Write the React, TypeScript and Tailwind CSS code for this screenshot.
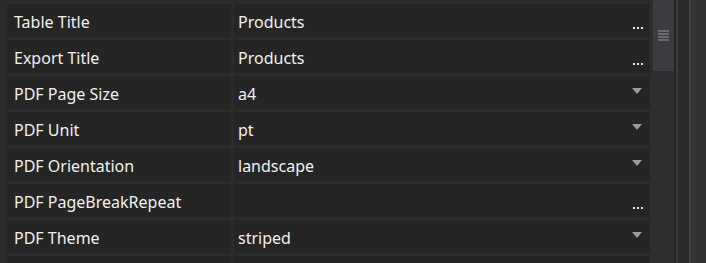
import React from "react";

type Row = { label: string; value: string; kind: "dots" | "drop" | "none" };

const rows: Row[] = [
  { label: "Table Title", value: "Products", kind: "dots" },
  { label: "Export Title", value: "Products", kind: "dots" },
  { label: "PDF Page Size", value: "a4", kind: "drop" },
  { label: "PDF Unit", value: "pt", kind: "drop" },
  { label: "PDF Orientation", value: "landscape", kind: "drop" },
  { label: "PDF PageBreakRepeat", value: "", kind: "dots" },
  { label: "PDF Theme", value: "striped", kind: "drop" },
  { label: "", value: "", kind: "none" },
];

function Dots() {
  return (
    <div className="flex gap-[2px] self-end mb-[8px] mr-[7px]">
      <span className="w-[2px] h-[2px] bg-[#e8e8e8]" />
      <span className="w-[2px] h-[2px] bg-[#e8e8e8]" />
      <span className="w-[2px] h-[2px] bg-[#e8e8e8]" />
    </div>
  );
}

function Drop() {
  return (
    <svg width="10" height="6" viewBox="0 0 10 6" className="mr-[8px] mb-[3px]">
      <path d="M0 0 H10 L5 6 Z" fill="#9a9a9a" />
    </svg>
  );
}

export default function App() {
  return (
    <div
      className="w-[706px] h-[263px] overflow-hidden flex bg-[#2b2b2b] text-[#f0f0f0]"
      style={{ fontFamily: '"Noto Sans", "Open Sans", sans-serif' }}
    >
      <div className="w-[650px] flex flex-col gap-[3px] pt-[4px] pl-[7px] shrink-0">
        {rows.map((r, i) => (
          <div key={i} className="flex gap-[3px] h-[33px] shrink-0">
            <div className="w-[224px] bg-[#252525] flex items-center pl-[7px] pt-[2px] text-[16px]">
              {r.label}
            </div>
            <div className="flex-1 bg-[#252525] flex items-center pl-[4px] text-[16px]">
              <span className="flex-1 pt-[2px]">{r.value}</span>
              {r.kind === "dots" && <Dots />}
              {r.kind === "drop" && <Drop />}
            </div>
          </div>
        ))}
      </div>
      <div className="w-[24px] bg-[#2e2e30] pl-[3px] shrink-0">
        <div className="w-[21px] h-[71px] bg-[#3c3c40] flex flex-col items-center justify-center gap-[1px]">
          <span className="w-[11px] h-[2px] bg-[#6a6a6e]" />
          <span className="w-[11px] h-[2px] bg-[#6a6a6e]" />
          <span className="w-[11px] h-[2px] bg-[#6a6a6e]" />
          <span className="w-[11px] h-[2px] bg-[#6a6a6e]" />
        </div>
      </div>
      <div className="w-[2px] bg-[#262628] shrink-0" />
      <div className="w-[2px] bg-[#3a3a3c] shrink-0" />
      <div className="w-[11px] bg-[#2a2a2c] shrink-0" />
      <div className="w-[2px] bg-[#404042] shrink-0" />
      <div className="flex-1 bg-[#333335]" />
    </div>
  );
}
